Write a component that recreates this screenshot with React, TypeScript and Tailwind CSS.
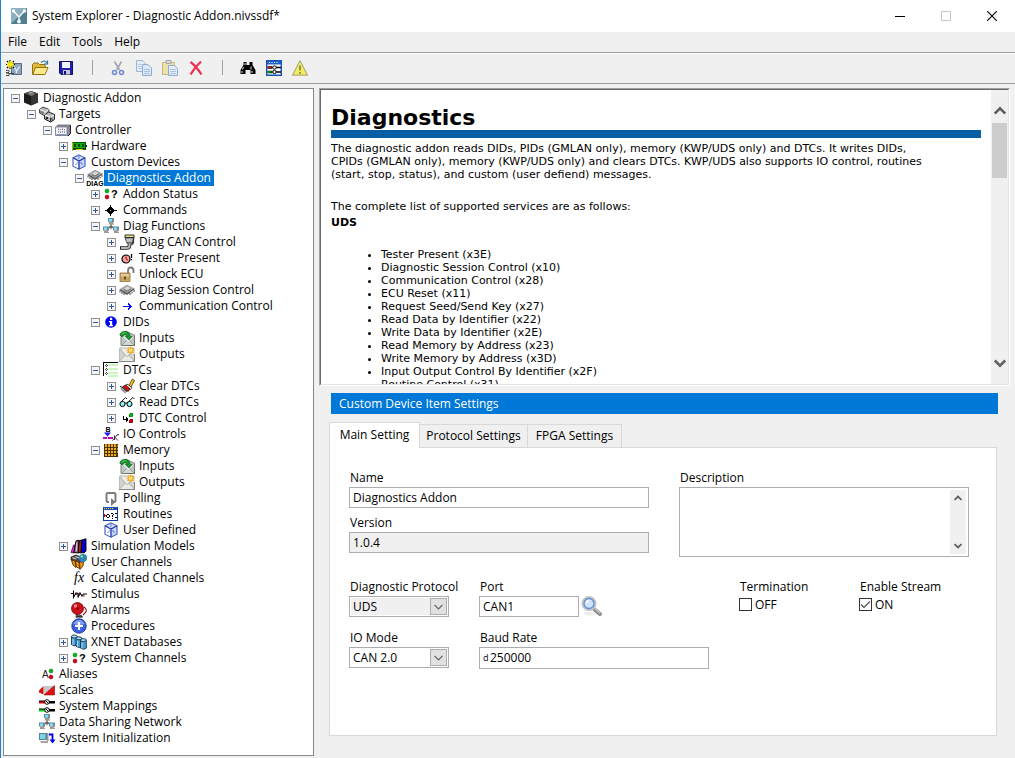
import React, { useState } from "react";

type IconProps = { children: React.ReactNode; crisp?: boolean };

function Glyph({ children, crisp }: IconProps) {
  return (
    <svg
      viewBox="0 0 16 16"
      className="h-4 w-4 shrink-0 overflow-visible"
      fill="none"
      shapeRendering={crisp ? "crispEdges" : undefined}
      aria-hidden="true"
    >
      {children}
    </svg>
  );
}

/* ---------- tree icons ---------- */

const Chip = () => (
  <>
    <path d="M0 8 8 3l8 4-8 6z" fill="#5a5a5a" />
    <path d="M1 7 8 3l7 3.500-7 4.500z" fill="#a8a8a8" />
    <path d="M5 6.500 8.500 4.500l3.500 2-4 2.300z" fill="#d6d6d6" />
    <path d="M1 9v1.500M3 10v2M5 11v2M11 11v2M13 10v1.500M15 8v2" stroke="#444" strokeWidth="1" />
    <path d="M5 7.500l3 1.600 4-2.400" stroke="#555" strokeWidth=".8" />
  </>
);

const WhiteCube = () => (
  <>
    <path d="M8 1l6 2.800v8.400L8 15.200l-6-3V3.800z" fill="#fff" />
    <path d="M8 1l6 2.800L8 7 2 3.800z" fill="#d5e0fb" />
    <path d="M8 7l6-3.200v8.400l-6 3z" fill="#c6d4f8" />
    <path d="M8 1l6 2.800v8.400L8 15.200l-6-3V3.800z" stroke="#4a66c8" strokeWidth="1.200" />
    <path d="M2 3.800 8 7l6-3.200M8 7v8.200" stroke="#1f35a5" strokeWidth="1.300" />
    <path d="M8 1v4M4.500 11l3-3M8.500 8l3.500 2.500" stroke="#5c7fe0" strokeWidth="1" />
  </>
);

const Dots = ({ x, g, r }: { x: number; g: number; r: number }) => (
  <>
    <circle cx={x} cy={g} r="2" fill="#00b818" stroke="#036e10" strokeWidth=".5" />
    <circle cx={x} cy={r} r="2" fill="#d80010" stroke="#7a0008" strokeWidth=".5" />
  </>
);

const Computer = ({ x, y }: { x: number; y: number }) => (
  <>
    <path d={`M${x} ${y}h5v4h-5z`} fill="#5f8fa5" />
    <path d={`M${x + 1} ${y + 1}h3v2.500h-3z`} fill="#7fe0f8" />
    <path d={`M${x + 1} ${y + 4}h4v1.500h1v1h-5z`} fill="#a6968c" />
    <path d={`M${x + 5} ${y}h1v4.500h-1z`} fill="#8a8a8a" />
  </>
);

const icons: Record<string, React.ReactNode> = {
  blackCube: (
    <Glyph>
      <path d="M8 1l7 2.500v9L8 15.500l-7-3v-9z" fill="#1c1c1c" />
      <path d="M8 6l7-2.500v9L8 15.500z" fill="#363636" />
      <path d="M8 1l7 2.500L8 6 1 3.500z" fill="#4c4c4c" />
      <path d="M5 3.500 7.500 2l3.500.8V5L8 6z" fill="#777" />
      <path d="M5.500 2.800 7.500 1.500l3 .8-2.500 1.200z" fill="#a5a5a5" />
    </Glyph>
  ),
  targets: (
    <Glyph>
      <path d="M.5 3.500 4 1l6 2.500v4L6 10 .5 7z" fill="#b9b9b9" stroke="#333" strokeWidth=".9" />
      <path d="M1 3.500l5 2.200L9.500 3.500M6 6v3.500" stroke="#f5f5f5" strokeWidth=".9" />
      <path d="M2 5v2M4 5.500v2.500" stroke="#444" />
      <path d="M5.500 9 9.500 6l6 2.500v5l-4 2.500-6-3z" fill="#bdbdbd" stroke="#222" strokeWidth="1" />
      <path d="M6 9l5.500 2.500L15 9" stroke="#fff" strokeWidth="1" />
      <circle cx="8" cy="12" r="1.300" fill="#222" />
      <path d="M11.500 11.500V15.500M13 11.500v3" stroke="#333" />
    </Glyph>
  ),
  controller: (
    <Glyph>
      <path d="M1 5l2-2h12v8.500L13 13.500H1z" fill="#8f8f9c" stroke="#666672" strokeWidth=".8" />
      <path d="M.5 5h11.500v8.500H.5z" fill="#f2f2fa" stroke="#777784" strokeWidth=".8" />
      <path d="M3.500 6.500v4M5.500 7v4M7.500 6.500v4M9.500 7v4" stroke="#8b8b98" strokeDasharray="1.500 1" />
      <path d="M1.500 12.500h9.500" stroke="#6f7fc0" strokeWidth=".8" />
      <path d="M15.500 3v8.500L13 14" stroke="#223" strokeWidth="1" />
    </Glyph>
  ),
  hardware: (
    <Glyph crisp>
      <path d="M1 4h14v8H1z" fill="#054d05" />
      <path d="M2 5h12v5H2z" fill="#0cae16" />
      <path d="M3 6h2v3H3zM7 6h2v3H7zM11 6h2v3h-2z" fill="#064a08" />
      <path d="M5 11h7v1H5z" fill="#e8d200" />
      <path d="M1 4h1v9H1z" fill="#c9a800" />
      <path d="M14 7h2v2h-2z" fill="#222" />
    </Glyph>
  ),
  whiteCube: (
    <Glyph>
      <WhiteCube />
    </Glyph>
  ),
  diag: (
    <Glyph>
      <g transform="translate(0 -3)">
        <Chip />
      </g>
      <text x="8" y="15.500" fontSize="7" fontWeight="700" textAnchor="middle" fill="#000" fontFamily="Liberation Sans, sans-serif">
        DIAG
      </text>
    </Glyph>
  ),
  status: (
    <Glyph>
      <Dots x={4} g={5} r={11} />
      <text x="8" y="12" fontSize="11" fontWeight="700" fill="#000" fontFamily="Liberation Sans, sans-serif">
        ?
      </text>
    </Glyph>
  ),
  commands: (
    <Glyph crisp>
      <path d="M2 8h12v1H2zM7 3h1v11H7z" fill="#000" />
      <path d="M6 5h3v1h1v1h1v3h-1v1H9v1H6v-1H5v-1H4V7h1V6h1z" fill="#000" />
      <path d="M7 8h1v1H7z" fill="#b5b5b5" />
    </Glyph>
  ),
  network: (
    <Glyph>
      <path d="M8 6v5M3 12l5-4 5 4" stroke="#555" strokeWidth="1.200" />
      <Computer x={5} y={0} />
      <Computer x={0} y={8.5} />
      <Computer x={10} y={8.5} />
    </Glyph>
  ),
  connector: (
    <Glyph>
      <path d="M6 1h9v2.500H6z" fill="#e8e37a" stroke="#222" strokeWidth=".9" />
      <path d="M6 3.500h9L13.500 9H8z" fill="#a4a4a4" stroke="#222" strokeWidth=".9" />
      <path d="M8 5v3M10 5v3M12 5v3" stroke="#dedede" strokeWidth=".9" />
      <path d="M10.500 9v2.500q0 2.500-3 2.500H1" stroke="#222" strokeWidth="3.600" />
      <path d="M10.500 9v2.500q0 2.500-3 2.500H2" stroke="#b5b5b5" strokeWidth="2" />
      <path d="M14.500 4v5l-2 2" stroke="#333" strokeWidth="1.200" />
    </Glyph>
  ),
  clock: (
    <Glyph>
      <circle cx="7" cy="9" r="4" fill="#f8a2a2" stroke="#000" strokeWidth="1.200" />
      <path d="M7 6.500V9l2 1.200" stroke="#900" />
      <path d="M12.500 4v4M12.500 9v1.200" stroke="#000" strokeWidth="1.300" />
    </Glyph>
  ),
  lock: (
    <Glyph>
      <path d="M9 8V4.500Q9 1.500 11.700 1.500T14.500 4.500V7" stroke="#77777d" strokeWidth="1.800" />
      <path d="M1 7h10v8.500H1z" fill="#c7a667" stroke="#987438" strokeWidth=".8" />
      <path d="M2 8h8v2.500H2z" fill="#e2cb98" />
      <path d="M6 10.500v3" stroke="#4f3a13" strokeWidth="1.600" />
    </Glyph>
  ),
  chip: (
    <Glyph>
      <Chip />
    </Glyph>
  ),
  arrow: (
    <Glyph crisp>
      <path d="M4 8h8v1H4zM9 5h1v1h1v1h1v1h1v1h-1v1h-1v1h-1v1H9v-2h1V9H9V8h1V7H9z" fill="#0000f0" />
    </Glyph>
  ),
  info: (
    <Glyph>
      <circle cx="8" cy="8" r="5.800" fill="#0000f0" />
      <path d="M7 3.800h2.200V6H7zM6 7h3.200v4H10v1.200H6V11h1V8.200H6z" fill="#fff" />
    </Glyph>
  ),
  inputs: (
    <Glyph>
      <path d="M2 4.500 7 1l8.500 4.500v10H2z" fill="#c3c8c5" stroke="#727a75" strokeWidth=".9" />
      <path d="M2.500 15.500 8 10h2l5.500 5.500z" fill="#d2d6d4" stroke="#8a918d" strokeWidth=".8" />
      <path d="M4 6.500h10.500L10 11H8.500z" fill="#f6f8f7" />
      <path d="M15.500 5.500v10H4" stroke="#6b716d" />
      <path d="M.8 5Q2 .8 7 1.500q4 .8 4.300 5h1.900L9.800 10 6.300 6.500h2Q8 4.500 5.500 4.700 3.500 5 3.500 7z" fill="#189a2c" stroke="#0a5f17" strokeWidth=".7" />
      <path d="M2.500 4Q4 2.200 7 2.800" stroke="#5fd070" strokeWidth=".9" />
    </Glyph>
  ),
  outputs: (
    <Glyph>
      <path d="M.5 2h15v13.500H.5z" fill="#d3d3cf" />
      <path d="M0 15.500 6.500 8.500h3l6 7z" fill="#e9e9e6" stroke="#a3a39f" strokeWidth=".8" />
      <path d="M.5 2h15L8.500 10.500h-1z" fill="#eeeeea" stroke="#a3a39f" strokeWidth=".8" />
      <path d="M.5 15.500V2" stroke="#bdbdb9" />
      <path d="M0 15.500h15.500V8" stroke="#858581" />
      <path
        d="M11.500 0l1 2 2-.8-.6 2.100 2.100.9-2 1 .9 2.100-2.300-.6-1.100 2.100-1.100-2.100-2.300.6.900-2.100-2-1 2.100-.9-.6-2.100 2 .8z"
        fill="#f6ac1e"
      />
      <circle cx="11.500" cy="4.300" r="1.800" fill="#ffe07a" />
    </Glyph>
  ),
  list: (
    <Glyph crisp>
      <path d="M0 0h15v1H0zM0 0h1v14H0z" fill="#000" />
      <path d="M5 2h10v2H5zM5 6h10v2H5zM5 10h10v2H5zM5 13h10v2H5z" fill="#c8f8c0" />
      <path d="M3 2h1v1H3zM2 3h1v1H2zM4 3h1v1H4zM3 4h1v1H3zM3 6h1v1H3zM2 7h1v1H2zM4 7h1v1H4zM3 8h1v1H3zM3 10h1v1H3zM2 11h1v1H2zM4 11h1v1H4zM3 12h1v1H3z" fill="#444" />
    </Glyph>
  ),
  eraser: (
    <Glyph>
      <path d="M1 11l4-3 5 4-4 3.500z" fill="#9b9b9b" />
      <path d="M10 7l3.500-6 2 1.500L12 9z" fill="#f7bd18" stroke="#4d3200" strokeWidth=".8" />
      <path d="M8 6l5 3.500-1.500 2L6.500 8z" fill="#eee" stroke="#222" strokeWidth=".8" />
      <path d="M4 8.500 6.500 7l4.500 4-2 2.500z" fill="#e01010" stroke="#400" strokeWidth=".8" />
      <path d="M1 8.500l3 1 4 4" stroke="#111" />
    </Glyph>
  ),
  glasses: (
    <Glyph>
      <circle cx="3.500" cy="10" r="2.600" fill="#7ef0f0" stroke="#000" />
      <circle cx="10.500" cy="10" r="2.600" fill="#7ef0f0" stroke="#000" />
      <path d="M6 9h2M2 8l4.500-4.500L8 5M9.500 7.500 14 3.500 15.500 5" stroke="#000" strokeWidth=".9" />
      <path d="M2.500 10.500l2-2M9.500 10.500l2-2" stroke="#fff" />
    </Glyph>
  ),
  dtc: (
    <Glyph crisp>
      <path d="M4 6h1v4H4zM4 9h5v1H4zM7 7h1v5H7zM8 8h1v3H8z" fill="#000" />
      <Dots x={12} g={5} r={11} />
    </Glyph>
  ),
  io: (
    <Glyph>
      <text x="2.500" y="5.500" fontSize="7" fontWeight="700" fill="#000" fontFamily="Liberation Sans, sans-serif">
        B
      </text>
      <path d="M1 6.500h7L4.500 10.500z" fill="#1a1af0" />
      <path d="M0 12h4M5 12h5" stroke="#c800c8" strokeWidth="2" />
      <path d="M9.500 14.500l5-6M11.500 9.500v4.500M12 11.500l3 3M14 9l2-.5" stroke="#222" strokeWidth=".9" />
    </Glyph>
  ),
  memory: (
    <Glyph crisp>
      <path d="M1 2h14v13H1z" fill="#4c3200" />
      <path d="M2 3h2v2H2zM5 3h2v2H5zM8 3h2v2H8zM11 3h2v2h-2zM2 6h2v2H2zM5 6h2v2H5zM8 6h2v2H8zM11 6h2v2h-2zM2 9h2v2H2zM5 9h2v2H5zM8 9h2v2H8zM11 9h2v2h-2zM2 12h2v2H2zM5 12h2v2H5zM8 12h2v2H8zM11 12h2v2h-2z" fill="#f2ae1c" />
      <path d="M2 2h2v1H2zM5 2h2v1H5zM8 2h2v1H8zM11 2h2v1h-2zM14 3h1v2h-1zM14 6h1v2h-1zM14 9h1v2h-1z" fill="#c88f14" />
    </Glyph>
  ),
  polling: (
    <Glyph>
      <path d="M6 12H5Q3.500 12 3.500 10.500v-6Q3.500 3 5 3h6q1.500 0 1.500 1.500v6q0 1.500-1.500 1.500" stroke="#7c7c7c" strokeWidth="2" />
      <path d="M8 8l4.500 4L8 16z" fill="#7c7c7c" />
    </Glyph>
  ),
  routines: (
    <Glyph crisp>
      <path d="M0 1h15v14H0z" fill="#143c9c" />
      <path d="M1 4h13v10H1z" fill="#fff" />
      <path d="M1 1h13v3H1z" fill="#1c50c0" />
      <path d="M1 2h1v1H1zM3 2h1v1H3zM5 2h1v1H5zM7 2h1v1H7zM9 2h1v1H9z" fill="#ffe000" />
      <path d="M1 8h1v1h1v1H2v1H1z" fill="#e00000" />
      <path d="M3 9h1v2H3zM4 8h2v1H4zM4 11h2v1H4zM6 9h1v2H6zM8 7h2v1H8zM10 8h1v1h-1zM9 9h1v2H9zM9 12h1v1H9zM12 7h2v1h-2zM12 11h2v1h-2z" fill="#000" />
    </Glyph>
  ),
  models: (
    <Glyph>
      <path d="M0 14.500 2.500 7l1.800 0L3 15z" fill="#e020e0" stroke="#300030" strokeWidth=".7" />
      <path d="M3 14.500 5 3l3-.8L7.500 15z" fill="#8c8c8c" stroke="#000" />
      <path d="M7 14.500 8 3l2.500-1L10.500 15z" fill="#b41824" stroke="#000" />
      <path d="M10 14.500 10.800 2l4.200-1.200V13l-2 2z" fill="#0000c8" stroke="#000" strokeWidth=".9" />
      <path d="M5.500 5v8" stroke="#ddd" strokeWidth=".8" />
    </Glyph>
  ),
  userChannels: (
    <Glyph>
      <path d="M0 3l5-2 5 2v4L6 9 0 6z" fill="#4a4a4a" stroke="#111" strokeWidth=".7" />
      <path d="M1.500 3.500 5 5M4.500 2.500 8 4" stroke="#d8cfc0" strokeWidth="1.200" />
      <path d="M.5 6l3.500 1 1 6.500L2 11zM4.500 7l3.500 1 .5 6.500L5.500 13zM8.500 8h4l-.5 4-3 3.500z" fill="#f0981a" stroke="#5a3100" strokeWidth=".9" />
      <circle cx="12" cy="4" r="4" fill="#2b7fd6" />
      <path d="M9.500 1.500q3-2 4 0t-1 2-3 1zM12.500 5l3-.5q0 2-2 3z" fill="#2f9e48" />
      <circle cx="10.800" cy="2.600" r="1" fill="#bfe5ff" />
    </Glyph>
  ),
  fx: (
    <Glyph>
      <text x="3" y="12" fontSize="14" fontStyle="italic" fill="#000" fontFamily="Liberation Serif, serif">
        fx
      </text>
    </Glyph>
  ),
  stimulus: (
    <Glyph>
      <path d="M0 7.500h3M2.500 4.500v7L5 7l2 .5v4L9 7l2 3 1.500-2H16" stroke="#000" strokeWidth="1.100" />
      <path d="M5 8.500h2M12 10h2" stroke="#d02020" />
    </Glyph>
  ),
  alarm: (
    <Glyph>
      <path d="M5 12l6 1 0 2.500H4.500z" fill="#555" />
      <circle cx="6.500" cy="6.500" r="6" fill="#cf1018" stroke="#6d060a" strokeWidth=".8" />
      <circle cx="4.500" cy="4" r="1.800" fill="#ff8d8d" />
      <circle cx="6.500" cy="6.500" r="1.200" fill="#700" />
      <path d="M13 5q3 2 2 5l-3 3" stroke="#a01018" strokeWidth="1.100" />
      <path d="M5 14.800h7" stroke="#222" />
    </Glyph>
  ),
  plus: (
    <Glyph>
      <circle cx="8" cy="8" r="7.200" fill="#3a5fe6" stroke="#1c2f8e" strokeWidth=".9" />
      <path d="M2.500 6Q4 2 8 2t5.500 4Q8 8 2.500 6z" fill="#7f9ff7" />
      <path d="M8 4v8M4 8h8" stroke="#fff" strokeWidth="2.200" />
    </Glyph>
  ),
  databases: (
    <Glyph>
      {[0, 4.5, 9].map((x, i) => (
        <g key={x} transform={`translate(${x} ${i * 1.8})`}>
          <path d="M.5 2.500v8q2.800 2.500 5.800 0v-8z" fill="#4a9fd8" stroke="#12344d" strokeWidth=".9" />
          <ellipse cx="3.400" cy="2.500" rx="2.900" ry="1.500" fill="#a8daf5" stroke="#12344d" strokeWidth=".9" />
          <path d="M2 5v6" stroke="#b4e0f8" strokeWidth=".9" />
        </g>
      ))}
    </Glyph>
  ),
  aliases: (
    <Glyph>
      <text x="3" y="12" fontSize="10" fill="#222" fontFamily="Liberation Sans, sans-serif">
        A
      </text>
      <Dots x={12} g={5} r={11} />
    </Glyph>
  ),
  scales: (
    <Glyph>
      <path d="M0 8.500 4.500 4v8.500L0 10.500z" fill="#d41010" />
      <path d="M5 4h10.500v9H5z" fill="#c8c8c8" />
      <path d="M5 13 15.500 3.500V13z" fill="#e01010" stroke="#8a0000" strokeWidth=".5" />
    </Glyph>
  ),
  mappings: (
    <Glyph>
      <path d="M0 3h6v2.500H0z" fill="#e00000" />
      <path d="M0 11h6v2.500H0z" fill="#00d818" />
      <path d="M0 2.500h6v1H0zM0 10.500h6v1H0zM10 3h6v2.500h-6zM10 11h6v2.500h-6z" fill="#000" />
      <circle cx="8" cy="4" r="2.300" fill="#fff" stroke="#000" />
      <circle cx="8" cy="12" r="2.300" fill="#fff" stroke="#000" />
      <path d="M7 3l2 2M7 11l2 2" stroke="#000" />
    </Glyph>
  ),
  init: (
    <Glyph>
      <path d="M0 3h8v7H0z" fill="#5c8294" />
      <path d="M1 4h5.500v5H1z" fill="#7bd4e8" />
      <path d="M8 3h1.500v8H8z" fill="#999" />
      <path d="M1 11h8v2H2z" fill="#aaa49e" />
      <path d="M10 4.500h3.500V11" stroke="#0000e8" strokeWidth="1.800" />
      <path d="M10.500 9.500h6l-3 4z" fill="#0000e8" />
    </Glyph>
  ),
};

/* ---------- tree ---------- */

type Node = { label: string; icon: string; open?: boolean; closed?: boolean; children?: Node[] };

const tree: Node[] = [
  {
    label: "Diagnostic Addon",
    icon: "blackCube",
    open: true,
    children: [
      {
        label: "Targets",
        icon: "targets",
        open: true,
        children: [
          {
            label: "Controller",
            icon: "controller",
            open: true,
            children: [
              { label: "Hardware", icon: "hardware", closed: true },
              {
                label: "Custom Devices",
                icon: "whiteCube",
                open: true,
                children: [
                  {
                    label: "Diagnostics Addon",
                    icon: "diag",
                    open: true,
                    children: [
                      { label: "Addon Status", icon: "status", closed: true },
                      { label: "Commands", icon: "commands", closed: true },
                      {
                        label: "Diag Functions",
                        icon: "network",
                        open: true,
                        children: [
                          { label: "Diag CAN Control", icon: "connector", closed: true },
                          { label: "Tester Present", icon: "clock", closed: true },
                          { label: "Unlock ECU", icon: "lock", closed: true },
                          { label: "Diag Session Control", icon: "chip", closed: true },
                          { label: "Communication Control", icon: "arrow", closed: true },
                        ],
                      },
                      {
                        label: "DIDs",
                        icon: "info",
                        open: true,
                        children: [
                          { label: "Inputs", icon: "inputs" },
                          { label: "Outputs", icon: "outputs" },
                        ],
                      },
                      {
                        label: "DTCs",
                        icon: "list",
                        open: true,
                        children: [
                          { label: "Clear DTCs", icon: "eraser", closed: true },
                          { label: "Read DTCs", icon: "glasses", closed: true },
                          { label: "DTC Control", icon: "dtc", closed: true },
                        ],
                      },
                      { label: "IO Controls", icon: "io" },
                      {
                        label: "Memory",
                        icon: "memory",
                        open: true,
                        children: [
                          { label: "Inputs", icon: "inputs" },
                          { label: "Outputs", icon: "outputs" },
                        ],
                      },
                      { label: "Polling", icon: "polling" },
                      { label: "Routines", icon: "routines" },
                      { label: "User Defined", icon: "whiteCube" },
                    ],
                  },
                ],
              },
              { label: "Simulation Models", icon: "models", closed: true },
              { label: "User Channels", icon: "userChannels" },
              { label: "Calculated Channels", icon: "fx" },
              { label: "Stimulus", icon: "stimulus" },
              { label: "Alarms", icon: "alarm" },
              { label: "Procedures", icon: "plus" },
              { label: "XNET Databases", icon: "databases", closed: true },
              { label: "System Channels", icon: "status", closed: true },
            ],
          },
        ],
      },
      { label: "Aliases", icon: "aliases" },
      { label: "Scales", icon: "scales" },
      { label: "System Mappings", icon: "mappings" },
      { label: "Data Sharing Network", icon: "network" },
      { label: "System Initialization", icon: "init" },
    ],
  },
];

function TreeItem({ node }: { node: Node }) {
  const selected = node.label === "Diagnostics Addon";
  const expandable = node.open || node.closed;
  return (
    <li role="treeitem" aria-selected={selected} aria-expanded={expandable ? !!node.open : undefined}>
      <div className="flex h-4 items-center">
        <span className="mr-[3px] flex w-[9px] shrink-0">
          {expandable && (
            <button type="button" aria-label={(node.open ? "Collapse " : "Expand ") + node.label} className="block h-[9px] w-[9px]">
              <svg viewBox="0 0 9 9" className="block h-[9px] w-[9px]" shapeRendering="crispEdges">
                <path d="M0 0h9v9H0z" fill="#919191" />
                <path d="M1 1h7v7H1z" fill="#f6f6f6" />
                <path d="M2 4h5v1H2z" fill="#3155a5" />
                {node.closed && <path d="M4 2h1v5H4z" fill="#3155a5" />}
              </svg>
            </button>
          )}
        </span>
        {icons[node.icon]}
        <span
          className={
            selected
              ? "ml-px h-4 bg-[#0078d7] px-[3px] leading-4 whitespace-nowrap text-white"
              : "ml-px h-4 px-[3px] leading-4 whitespace-nowrap"
          }
        >
          {node.label}
        </span>
      </div>
      {node.children && (
        <ul role="group" className="pl-4">
          {node.children.map((c) => (
            <TreeItem key={c.label} node={c} />
          ))}
        </ul>
      )}
    </li>
  );
}

/* ---------- toolbar ---------- */

const tools: { label: string; art?: React.ReactNode }[] = [
  {
    label: "New",
    art: (
      <>
        <path d="M5.500 3.500h10v11h-10z" fill="#8fa6bf" stroke="#4a5f78" strokeWidth=".9" />
        <path d="M8 6.500 10.500 11 13.500 6.500M10.500 11v2" stroke="#e8eff5" strokeWidth="1.300" />
        <path d="M4 0v9M0 4.500h9M1 1l7 7M8 1 1 8" stroke="#000" strokeWidth="1.100" />
        <path d="M4.200 1v7M1 4.500h7M2 2l5 5M7 2 2 7" stroke="#ffee00" strokeWidth="1.300" />
        <path d="M0 10.500q4-1 3 1.500t-3 .5q4 0 3 3H0M3 13.500h5" stroke="#333" strokeWidth=".9" />
      </>
    ),
  },
  {
    label: "Open",
    art: (
      <>
        <path d="M.5 14V4.500L2 3h4l1.500 1.500H13V14z" fill="#e0b93a" stroke="#8a6a08" strokeWidth=".9" />
        <path d="M.7 14.500 3.500 7.500H16l-3 7z" fill="#ffe78c" stroke="#8a6a08" strokeWidth=".9" />
        <path d="M9 2.500Q12-.5 14.500 2.500M15.500.5v3.500h-3.500" stroke="#2a6c8e" strokeWidth="1.200" />
      </>
    ),
  },
  {
    label: "Save",
    art: (
      <>
        <path d="M1.500 1.500h13v13H3l-1.500-1.500z" fill="#2020a8" stroke="#10106c" />
        <path d="M4 2h8v6H4z" fill="#f1f3ff" />
        <path d="M5 10h7v4.500H5z" fill="#c8c8d8" />
        <path d="M6 11h2v3.500H6z" fill="#10106c" />
      </>
    ),
  },
  { label: "|" },
  {
    label: "Cut",
    art: (
      <>
        <path d="M4.500 1.500 9.500 10M11.500 1.500 6.500 10" stroke="#a2a7b2" strokeWidth="1.700" />
        <circle cx="4.500" cy="12.500" r="2" stroke="#7187cf" strokeWidth="1.500" />
        <circle cx="11.500" cy="12.500" r="2" stroke="#7187cf" strokeWidth="1.500" />
      </>
    ),
  },
  {
    label: "Copy",
    art: (
      <>
        <path d="M.5.500h6l3 3v8h-9z" fill="#e3edf8" stroke="#9cb6da" />
        <path d="M2 4.500h4M2 6.500h4M2 8.500h4" stroke="#b8cce6" />
        <path d="M6.500 4.500h5.500l3.500 3.500v7.500h-9z" fill="#dce9f8" stroke="#8fabd6" />
        <path d="M8 9.500h6M8 11.500h6M8 13.500h6" stroke="#aac2e2" />
      </>
    ),
  },
  {
    label: "Paste",
    art: (
      <>
        <path d="M.5 2.500h12v12H.5z" fill="#ebe2ad" stroke="#c8b878" />
        <path d="M4 .500h5v3H4z" fill="#dcdcdc" stroke="#a8a8a8" />
        <path d="M6.500 5.500h6l3 3v7h-9z" fill="#e3edf8" stroke="#8fabd6" />
        <path d="M8 9.500h6M8 11.500h6M8 13.500h6" stroke="#aac2e2" />
      </>
    ),
  },
  {
    label: "Delete",
    art: <path d="M2.500 2Q8 6 13.500 14.500M13 1.500Q7 7 2.500 14.500" stroke="#ee2f4f" strokeWidth="2.200" />,
  },
  { label: "|" },
  {
    label: "Find",
    art: (
      <>
        <path d="M3.500 2h3v3h3V2h3v3L15.500 10v4h-5v-4h-5v4h-5v-4L3.500 5z" fill="#000" />
        <path d="M3.500 7 2.500 9.500M11 6.500v3M5 3v2M2 11v2M12 11v2" stroke="#fff" strokeWidth=".9" />
      </>
    ),
  },
  {
    label: "Mappings",
    art: (
      <>
        <path d="M.7.700h14.600v14.600H.7z" fill="#fff" stroke="#1550b4" strokeWidth="1.400" />
        <path d="M1 1h14v3.500H1z" fill="#1c62cc" />
        <path d="M3 2.500h10" stroke="#fff" strokeDasharray="1 1.500" />
        <path d="M1.500 7.500h5M1.500 12h5" stroke="#000" strokeWidth="2.400" />
        <path d="M1.500 7.500h4" stroke="#e01010" strokeWidth="1.400" />
        <path d="M1.500 12h4" stroke="#00c818" strokeWidth="1.400" />
        <path d="M10 7.500h5M10 12h5" stroke="#000" strokeWidth="1.600" />
        <circle cx="8.500" cy="7.500" r="1.700" fill="#fff" stroke="#000" />
        <circle cx="8.500" cy="12" r="1.700" fill="#fff" stroke="#000" />
      </>
    ),
  },
  {
    label: "Warnings",
    art: (
      <>
        <path d="M8 .8 15.500 15.200H.5z" fill="#f5ee5a" stroke="#b0ae78" strokeWidth="1.200" strokeLinejoin="round" />
        <path d="M8 5.500v5M8 12v1.800" stroke="#7b7b6b" strokeWidth="1.600" />
      </>
    ),
  },
];

const services = [
  "Tester Present (x3E)",
  "Diagnostic Session Control (x10)",
  "Communication Control (x28)",
  "ECU Reset (x11)",
  "Request Seed/Send Key (x27)",
  "Read Data by Identifier (x22)",
  "Write Data by Identifier (x2E)",
  "Read Memory by Address (x23)",
  "Write Memory by Address (x3D)",
  "Input Output Control By Identifier (x2F)",
  "Routine Control (x31)",
];

function ScrollArrow({ down, small }: { down?: boolean; small?: boolean }) {
  return (
    <svg viewBox="0 0 12 9" className={small ? "h-[6px] w-2" : "h-[9px] w-3"} fill="none">
      <path d={down ? "M.8 1.500 6 6.700l5.200-5.200" : "M.8 7.500 6 2.300l5.200 5.200"} stroke="#5f5f5f" strokeWidth="2.600" />
    </svg>
  );
}

function SelectBox({ id, options, muted }: { id: string; options: string[]; muted?: boolean }) {
  return (
    <div className="relative">
      <select
        id={id}
        className={
          "block h-[21px] w-full appearance-none rounded-none border border-[#abadb3] pl-[3px] outline-none " +
          (muted ? "bg-[#f0f0f0] shadow-[inset_0_0_0_1px_#fff]" : "bg-white")
        }
      >
        {options.map((o) => (
          <option key={o}>{o}</option>
        ))}
      </select>
      <span className="pointer-events-none absolute top-[2px] right-[2px] flex h-[17px] w-[17px] items-center justify-center border border-[#adadad] bg-[#e1e1e1]">
        <svg viewBox="0 0 9 6" className="h-[6px] w-[9px]" fill="none">
          <path d="M.5.800l4 4 4-4" stroke="#606060" strokeWidth="1.200" />
        </svg>
      </span>
    </div>
  );
}

const labelCls = "block h-[18px] pl-px leading-[18px] whitespace-nowrap";
const inputCls = "block h-[21px] rounded-none border border-[#abadb3] px-[3px] outline-none";

function CheckField({ id, label, initial }: { id: string; label: string; initial: boolean }) {
  const [on, setOn] = useState(initial);
  return (
    <div>
      <label htmlFor={id} className={labelCls}>
        {label}
      </label>
      <div className="flex h-[17px] items-center gap-[3px]">
        <span className="grid">
          <input
            id={id}
            type="checkbox"
            checked={on}
            onChange={(e) => setOn(e.target.checked)}
            className="col-start-1 row-start-1 h-[13px] w-[13px] appearance-none border border-[#333] bg-white"
          />
          {on && (
            <svg viewBox="0 0 13 13" className="pointer-events-none col-start-1 row-start-1 h-[13px] w-[13px]" fill="none">
              <path d="M2 6.500 5 9.500l6-6.200" stroke="#444" strokeWidth="1.200" />
            </svg>
          )}
        </span>
        <span>{on ? "ON" : "OFF"}</span>
      </div>
    </div>
  );
}

const tabs = ["Main Setting", "Protocol Settings", "FPGA Settings"];
const tabWidths = ["min-w-[91px]", "min-w-[109px]", "min-w-[95px]"];

export default function App() {
  const [tab, setTab] = useState(0);
  return (
    <div className="flex min-h-screen flex-col border-l border-[#1883d7] bg-[#f0f0f0] font-['Open_Sans','Noto_Sans',sans-serif] text-[12px] text-black">
      <header className="flex h-8 items-center bg-white pl-[10px]">
        <svg viewBox="0 0 16 16" className="h-4 w-4" fill="none" aria-hidden="true">
          <path d="M0 0h16v16H0z" fill="#4f7d92" />
          <path d="M0 0h16L0 16z" fill="#8fb0be" />
          <path d="M2.500 3 8 9l5.500-6M8 9v4" stroke="#fff" strokeWidth="1.300" />
          <circle cx="2.500" cy="3" r="1.700" fill="#fff" />
          <circle cx="13.500" cy="3" r="1.700" fill="#fff" />
          <circle cx="8" cy="13.500" r="1.900" fill="#fff" />
        </svg>
        <h1 className="ml-[5px] flex-1">System Explorer - Diagnostic Addon.nivssdf*</h1>
        <button type="button" aria-label="Minimize" className="flex h-8 w-[46px] items-center justify-center">
          <svg viewBox="0 0 10 10" className="h-[10px] w-[10px]" fill="none">
            <path d="M0 5.500h10" stroke="#000" />
          </svg>
        </button>
        <button type="button" aria-label="Maximize" className="flex h-8 w-[46px] items-center justify-center">
          <svg viewBox="0 0 10 10" className="h-[10px] w-[10px]" fill="none">
            <path d="M.5.500h9v9h-9z" stroke="#c4c4c4" />
          </svg>
        </button>
        <button type="button" aria-label="Close" className="flex h-8 w-[46px] items-center justify-center">
          <svg viewBox="0 0 10 10" className="h-[10px] w-[10px]" fill="none">
            <path d="M0 0l10 10M10 0 0 10" stroke="#000" strokeWidth="1.100" />
          </svg>
        </button>
      </header>

      <nav className="flex h-[21px] items-center border-b border-[#a0a0a0]">
        {["File", "Edit", "Tools", "Help"].map((m) => (
          <button key={m} type="button" className="px-[6px] leading-[18px] first:pl-[7px]">
            {m}
          </button>
        ))}
      </nav>

      <div className="flex h-[31px] items-center border-t border-b border-t-white border-b-[#a0a0a0] pb-[2px]">
        {tools.map((t, i) =>
          t.art ? (
            <button key={t.label} type="button" aria-label={t.label} className="flex w-[26px] justify-center">
              <Glyph>{t.art}</Glyph>
            </button>
          ) : (
            <span key={i} className="flex w-[26px] justify-center">
              <span className="h-[15px] w-px bg-[#a0a0a0]" />
            </span>
          ),
        )}
      </div>

      <main className="flex flex-1 gap-[5px] pt-1 pr-[5px] pb-[2px] pl-[2px]">
        <aside className="w-[311px] shrink-0 border border-[#828790] bg-white pt-px pl-[7px]">
          <ul role="tree" aria-label="System tree">
            {tree.map((n) => (
              <TreeItem key={n.label} node={n} />
            ))}
          </ul>
        </aside>

        <section className="flex min-w-0 flex-1 flex-col">
          <div className="h-[298px] border border-t-[#a0a0a0] border-r-white border-b-white border-l-[#a0a0a0]">
            <div className="flex h-full border border-t-[#696969] border-r-[#e3e3e3] border-b-[#e3e3e3] border-l-[#696969] bg-white">
              <article className="min-w-0 flex-1 overflow-hidden px-[10px] pt-[15px] font-['DejaVu_Sans',sans-serif] text-[11px] leading-[13px]">
                <h2 className="border-b-8 border-[#065fa5] text-[22px] leading-[25px] font-bold">Diagnostics</h2>
                <p className="mt-1">
                  The diagnostic addon reads DIDs, PIDs (GMLAN only), memory (KWP/UDS only) and DTCs. It writes DIDs,
                  <br />
                  CPIDs (GMLAN only), memory (KWP/UDS only) and clears DTCs. KWP/UDS also supports IO control, routines
                  <br />
                  (start, stop, status), and custom (user defiend) messages.
                </p>
                <p className="mt-[19px]">The complete list of supported services are as follows:</p>
                <p className="mt-[3px] font-bold">UDS</p>
                <ul className="mt-[19px] list-disc pl-[50px]">
                  {services.map((s) => (
                    <li key={s}>{s}</li>
                  ))}
                </ul>
              </article>
              <div className="flex w-[17px] flex-col items-center bg-[#f0f0f0] pt-4 pb-4">
                <ScrollArrow />
                <span className="mt-2 h-[55px] w-[15px] bg-[#cdcdcd]" />
                <span className="flex-1" />
                <ScrollArrow down />
              </div>
            </div>
          </div>

          <h2 className="mt-[7px] mr-3 ml-3 h-[21px] bg-[#0078d7] pl-2 leading-[21px] text-white">
            Custom Device Item Settings
          </h2>

          <div role="tablist" className="mt-2 ml-[10px] flex h-[25px] items-end">
            {tabs.map((t, i) => (
              <button
                key={t}
                type="button"
                role="tab"
                aria-selected={tab === i}
                onClick={() => setTab(i)}
                className={
                  tabWidths[i] +
                  (tab === i
                    ? " z-10 -mb-px h-[26px] border border-b-0 border-[#d9d9d9] bg-white pb-[2px] whitespace-nowrap"
                    : " -ml-px h-[23px] border border-b-0 border-[#d9d9d9] bg-[#f0f0f0] whitespace-nowrap")
                }
              >
                {t}
              </button>
            ))}
          </div>

          <form className="mr-[13px] mb-5 ml-[10px] flex-1 border border-[#d9d9d9] bg-white pt-[21px] pl-[19px]">
            <div className="flex gap-[30px]">
              <div className="w-[300px]">
                <label htmlFor="name" className={labelCls}>
                  Name
                </label>
                <input id="name" defaultValue="Diagnostics Addon" className={inputCls + " w-full bg-white"} />
                <label htmlFor="version" className={labelCls + " mt-[6px]"}>
                  Version
                </label>
                <input id="version" readOnly defaultValue="1.0.4" className={inputCls + " w-full bg-[#f0f0f0]"} />
              </div>
              <div className="w-[290px]">
                <label htmlFor="description" className={labelCls}>
                  Description
                </label>
                <div className="flex h-[70px] border border-[#abadb3] bg-white p-[2px]">
                  <textarea id="description" className="min-w-0 flex-1 resize-none outline-none" />
                  <div className="flex w-4 flex-col items-center justify-between bg-[#f0f0f0] py-[5px]">
                    <ScrollArrow small />
                    <ScrollArrow small down />
                  </div>
                </div>
              </div>
            </div>

            <div className="mt-[21px] grid grid-cols-[100px_230px_90px_1fr] gap-x-[30px] gap-y-3">
              <div>
                <label htmlFor="protocol" className={labelCls}>
                  Diagnostic Protocol
                </label>
                <SelectBox id="protocol" options={["UDS", "KWP", "GMLAN"]} muted />
              </div>
              <div>
                <label htmlFor="port" className={labelCls}>
                  Port
                </label>
                <div className="flex gap-[2px]">
                  <input id="port" defaultValue="CAN1" className={inputCls + " w-[100px] bg-white"} />
                  <button type="button" aria-label="Browse ports">
                    <svg viewBox="0 0 21 21" className="block h-[21px] w-[21px]" fill="none">
                      <ellipse cx="10" cy="17.500" rx="7" ry="2" fill="#ededed" />
                      <path d="M12.500 12.500l6.500 5.500" stroke="#8b8b8b" strokeWidth="4" strokeLinecap="round" />
                      <path d="M14 12.800l5 4.200" stroke="#c9c9c9" strokeWidth="1.500" strokeLinecap="round" />
                      <circle cx="8" cy="7.500" r="6.500" fill="#dceafc" stroke="#c2c2c2" strokeWidth="2" />
                      <circle cx="8" cy="7.500" r="5" fill="#cfe2fa" stroke="#5c8fd6" strokeWidth="1.300" />
                      <path d="M5 7q0-3 3.500-3.500Q7 8 5 7z" fill="#fff" />
                    </svg>
                  </button>
                </div>
              </div>
              <CheckField id="termination" label="Termination" initial={false} />
              <CheckField id="stream" label="Enable Stream" initial />
              <div>
                <label htmlFor="iomode" className={labelCls}>
                  IO Mode
                </label>
                <SelectBox id="iomode" options={["CAN 2.0", "CAN FD"]} />
              </div>
              <div>
                <label htmlFor="baud" className={labelCls}>
                  Baud Rate
                </label>
                <div className="flex h-[22px] items-center border border-[#abadb3] bg-white pl-[3px]">
                  <span className="w-[7px] text-[9px]">d</span>
                  <input id="baud" defaultValue="250000" className="min-w-0 flex-1 outline-none" />
                </div>
              </div>
            </div>
          </form>
        </section>
      </main>
    </div>
  );
}
